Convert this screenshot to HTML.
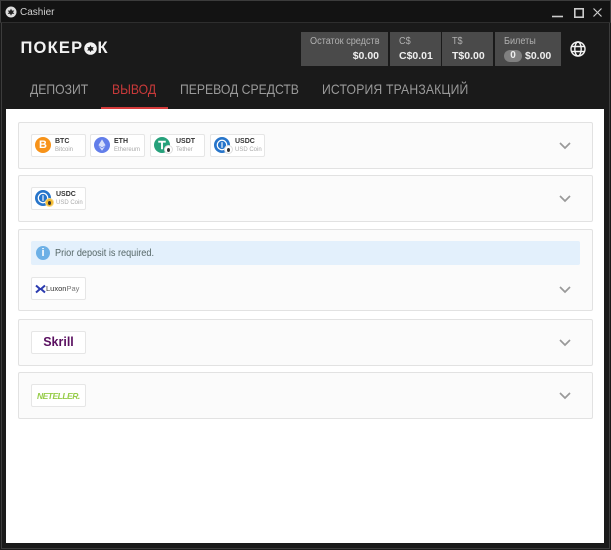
<!DOCTYPE html>
<html><head><meta charset="utf-8"><style>
*{box-sizing:border-box}
html,body{margin:0;padding:0}
body{width:611px;height:550px;position:relative;overflow:hidden;background:#1a1a1a;font-family:"Liberation Sans",sans-serif}
.a{position:absolute}
.frame{left:1px;top:1px;width:609px;height:548px;border:1px solid #3c3c3c}
.title{left:0;top:0;width:611px;height:23px;background:#131313;border:1px solid #3c3c3c;border-bottom:1px solid #2e2e2e}
.tab{top:81px;font-size:14px;color:#9a9a9a;white-space:nowrap;line-height:16px;transform:scaleX(.87);transform-origin:left}
.bal{top:32px;height:34px;background:#4a4a4a;color:#fff}
.bal .l{position:absolute;top:3px;font-size:10px;color:#b0b0b0;white-space:nowrap;line-height:13px;transform:scaleX(.91);transform-origin:left}
.bal .v{position:absolute;top:18px;font-size:10.5px;font-weight:bold;color:#eee;white-space:nowrap;line-height:13px}
.main{left:6px;top:109px;width:598px;height:434px;background:#fff}
.p{left:18px;width:575px;background:#fbfbfb;border:1px solid #e2e2e2;border-radius:2px}
.b{width:55px;height:23px;background:#fff;border:1px solid #e6e6e6;border-radius:2px}
.b .n{position:absolute;left:23px;top:3px;font-size:7px;font-weight:bold;color:#333;line-height:8px}
.b .s{position:absolute;left:23px;top:11px;font-size:6px;color:#aaa;line-height:8px;white-space:nowrap}
.c{position:absolute;left:3px;top:2px;width:16px;height:16px;border-radius:50%}
.d{position:absolute;left:13px;top:10px;width:9px;height:9px;border-radius:50%;background:#fff;border:1px solid #ddd}
.d:after{content:"";position:absolute;left:2px;top:1.5px;width:3px;height:4px;border-radius:50%;background:#333}
</style></head><body>
<div class="a frame"></div>
<div class="a title"></div>
<svg class="a" style="left:5px;top:6px" width="12" height="12" viewBox="0 0 12 12"><circle cx="6" cy="6" r="5.5" fill="#ddd"/><path d="M6 2.6L7 4.6 9.3 4.5 8 6.2 9.3 8 7 7.7 6 9.6 5 7.7 2.7 8 4 6.2 2.7 4.5 5 4.6Z" fill="#222"/></svg>
<div class="a" style="left:20px;top:6px;font-size:10px;line-height:14px;color:#d0d0d0">Cashier</div>
<svg class="a" style="left:550px;top:4px" width="56" height="16" viewBox="0 0 56 16"><path d="M2 12.5H13" stroke="#ccc" stroke-width="1.6"/><rect x="24.8" y="4.8" width="8.4" height="8.4" fill="none" stroke="#ccc" stroke-width="1.6"/><path d="M43.5 4.5L51.5 12.5M51.5 4.5L43.5 12.5" stroke="#ccc" stroke-width="1.2"/></svg>

<div class="a" style="left:20.5px;top:39px;font-size:16.5px;line-height:19px;font-weight:bold;color:#f2f2f2;letter-spacing:1.2px;white-space:nowrap">ПОКЕР</div>
<div class="a" style="left:97.5px;top:39px;font-size:16.5px;line-height:19px;font-weight:bold;color:#f2f2f2">К</div>
<svg class="a" style="left:84px;top:42px" width="13" height="13" viewBox="0 0 12 12"><circle cx="6" cy="6" r="5.8" fill="#f2f2f2"/><path d="M6 3L7 4.8 9 4.7 8 6.2 9 8 7 7.7 6 9.4 5 7.7 3 8 4 6.2 3 4.7 5 4.8Z" fill="#1a1a1a"/></svg>

<div class="a bal" style="left:301px;width:87px"><div class="l" style="left:9px">Остаток средств</div><div class="v" style="right:9px">$0.00</div></div>
<div class="a bal" style="left:390px;width:51px"><div class="l" style="left:9px">C$</div><div class="v" style="left:9px">C$0.01</div></div>
<div class="a bal" style="left:442px;width:51px"><div class="l" style="left:10px">T$</div><div class="v" style="left:10px">T$0.00</div></div>
<div class="a bal" style="left:495px;width:66px"><div class="l" style="left:9px">Билеты</div><div class="a" style="left:9px;top:18px;width:18px;height:12px;border-radius:6px;background:#808080;color:#eee;font-size:10px;font-weight:bold;text-align:center;line-height:12px">0</div><div class="v" style="left:30px">$0.00</div></div>
<svg class="a" style="left:570px;top:41px" width="16" height="16" viewBox="0 0 16 16" fill="none" stroke="#f4f4f4" stroke-width="1.4"><circle cx="8" cy="8" r="7"/><ellipse cx="8" cy="8" rx="3.2" ry="7"/><path d="M1.5 5.5H14.5M1.5 10.5H14.5"/></svg>

<div class="a tab" style="left:30px">ДЕПОЗИТ</div>
<div class="a tab" style="left:112px;color:#c93a3a">ВЫВОД</div>
<div class="a tab" style="left:180px">ПЕРЕВОД СРЕДСТВ</div>
<div class="a tab" style="left:322px;letter-spacing:.2px">ИСТОРИЯ ТРАНЗАКЦИЙ</div>
<div class="a" style="left:101px;top:107px;width:67px;height:3px;background:#d63c3c"></div>

<div class="a main"></div>
<div class="a p" style="top:122px;height:47px"></div>
<div class="a p" style="top:175px;height:47px"></div>
<div class="a p" style="top:229px;height:82px"></div>
<div class="a p" style="top:319px;height:47px"></div>
<div class="a p" style="top:372px;height:47px"></div>

<div class="a b" style="left:31px;top:134px"><div class="c" style="background:#f7931a"></div><div class="a" style="left:3px;top:2px;width:16px;text-align:center;font-size:11px;line-height:16px;font-weight:bold;color:#fff">B</div><div class="n">BTC</div><div class="s">Bitcoin</div></div>
<div class="a b" style="left:90px;top:134px"><div class="c" style="background:#627eea"></div><svg class="a" style="left:3px;top:2px" width="16" height="16" viewBox="0 0 17 17"><path d="M8.5 2.5L12.3 8.7 8.5 11 4.7 8.7ZM4.9 9.6L8.5 11.9 12.1 9.6 8.5 14.6Z" fill="#d8e0fa"/></svg><div class="n">ETH</div><div class="s">Ethereum</div></div>
<div class="a b" style="left:150px;top:134px"><div class="c" style="background:#26a17b"></div><svg class="a" style="left:3px;top:2px" width="16" height="16" viewBox="0 0 17 17"><path d="M4.5 5H12.5M8.5 5V13" stroke="#fff" stroke-width="2" fill="none"/></svg><div class="d"></div><div class="n" style="left:25px">USDT</div><div class="s" style="left:25px">Tether</div></div>
<div class="a b" style="left:210px;top:134px"><div class="c" style="background:#2775ca"></div><svg class="a" style="left:3px;top:2px" width="16" height="16" viewBox="0 0 17 17" fill="none" stroke="#fff"><circle cx="8.5" cy="8.5" r="5" stroke-width="1.3"/><path d="M8.5 5.5V11.5" stroke-width="1.2"/></svg><div class="d"></div><div class="n" style="left:24px">USDC</div><div class="s" style="left:24px">USD Coin</div></div>

<div class="a b" style="left:31px;top:187px"><div class="c" style="background:#2775ca"></div><svg class="a" style="left:3px;top:2px" width="16" height="16" viewBox="0 0 17 17" fill="none" stroke="#fff"><circle cx="8.5" cy="8.5" r="5" stroke-width="1.3"/><path d="M8.5 5.5V11.5" stroke-width="1.2"/></svg><div class="d" style="background:#f3ba2f;border-color:#f8d98a"></div><div class="n" style="left:24px">USDC</div><div class="s" style="left:24px">USD Coin</div></div>

<div class="a" style="left:31px;top:241px;width:549px;height:24px;background:#e3f0fc;border-radius:2px"></div>
<div class="a" style="left:36px;top:246px;width:14px;height:14px;border-radius:50%;background:#6cb0e6;color:#fff;font-size:11px;font-weight:bold;line-height:14px;text-align:center">i</div>
<div class="a" style="left:55px;top:246px;font-size:10.5px;line-height:14px;color:#566;white-space:nowrap;transform:scaleX(.87);transform-origin:left">Prior deposit is required.</div>

<div class="a b" style="left:31px;top:277px"><svg class="a" style="left:3px;top:6px" width="11" height="10" viewBox="0 0 11 10"><path d="M1 1.5L5 5 1 8.5M10 1.5L6 5 10 8.5" fill="none" stroke="#2b3bb0" stroke-width="2"/></svg><div class="a" style="left:14px;top:6px;font-size:7.5px;line-height:10px;color:#333;white-space:nowrap">Luxon<span style="color:#777">Pay</span></div></div>

<div class="a b" style="left:31px;top:331px"><div class="a" style="left:0;width:53px;top:3px;text-align:center;font-size:12.5px;font-weight:bold;line-height:15px;color:#5a1060">Skrill</div></div>
<div class="a b" style="left:31px;top:384px"><div class="a" style="left:5px;top:5px;font-size:8.5px;font-weight:bold;font-style:italic;line-height:12px;letter-spacing:-.5px;color:#96cc48;white-space:nowrap">NETELLER.</div></div>

<svg class="a" style="left:559px;top:141.5px" width="12" height="8" viewBox="0 0 12 8"><path d="M1 1L6 6 11 1" fill="none" stroke="#999" stroke-width="1.7"/></svg>
<svg class="a" style="left:559px;top:194.5px" width="12" height="8" viewBox="0 0 12 8"><path d="M1 1L6 6 11 1" fill="none" stroke="#999" stroke-width="1.7"/></svg>
<svg class="a" style="left:559px;top:285.5px" width="12" height="8" viewBox="0 0 12 8"><path d="M1 1L6 6 11 1" fill="none" stroke="#999" stroke-width="1.7"/></svg>
<svg class="a" style="left:559px;top:338.5px" width="12" height="8" viewBox="0 0 12 8"><path d="M1 1L6 6 11 1" fill="none" stroke="#999" stroke-width="1.7"/></svg>
<svg class="a" style="left:559px;top:391.5px" width="12" height="8" viewBox="0 0 12 8"><path d="M1 1L6 6 11 1" fill="none" stroke="#999" stroke-width="1.7"/></svg>
</body></html>
